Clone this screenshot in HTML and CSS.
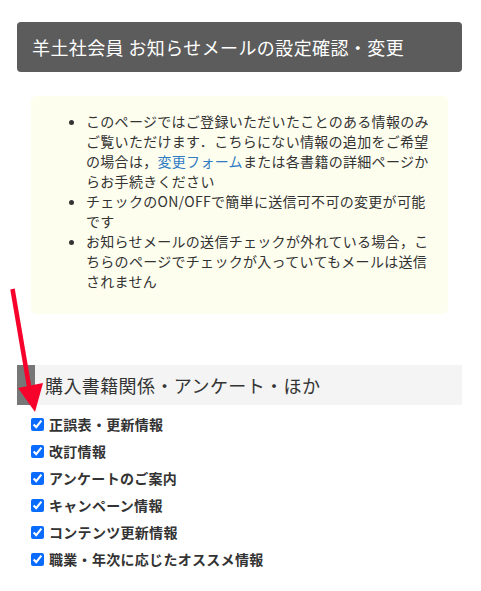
FILE: index.html
```html
<!DOCTYPE html>
<html lang="ja">
<head>
    <meta charset="UTF-8">
    <meta name="viewport" content="width=device-width, initial-scale=1.0">
    <title>お知らせメールの設定確認・変更</title>
    <link rel="stylesheet" href="styles.css">
</head>
<body>
    <div class="container">
        <h1 class="page-title">羊土社会員 お知らせメールの設定確認・変更</h1>

        <div class="notice">
            <ul>
                <li>このページではご登録いただいたことのある情報のみご覧いただけます．こちらにない情報の追加をご希望の場合は，<a href="#">変更フォーム</a>または各書籍の詳細ページからお手続きください</li>
                <li>チェックのON/OFFで簡単に送信可不可の変更が可能です</li>
                <li>お知らせメールの送信チェックが外れている場合，こちらのページでチェックが入っていてもメールは送信されません</li>
            </ul>
        </div>

        <h2 class="section-title">購入書籍関係・アンケート・ほか</h2>

        <div class="options">
            <label class="option"><input type="checkbox" checked>正誤表・更新情報</label>
            <label class="option"><input type="checkbox" checked>改訂情報</label>
            <label class="option"><input type="checkbox" checked>アンケートのご案内</label>
            <label class="option"><input type="checkbox" checked>キャンペーン情報</label>
            <label class="option"><input type="checkbox" checked>コンテンツ更新情報</label>
            <label class="option"><input type="checkbox" checked>職業・年次に応じたオススメ情報</label>
        </div>
    </div>

    <svg class="arrow" width="60" height="420" viewBox="0 0 60 420">
        <line x1="12.5" y1="289" x2="29" y2="386" stroke="#f7022a" stroke-width="4.5"/>
        <polygon points="18,388 43,383 35,412" fill="#f7022a"/>
    </svg>
</body>
</html>
```

FILE: styles.css
```css
body {
    margin: 0;
    padding: 0;
    background: #fff;
    color: #333;
    font-family: "Noto Sans CJK JP", "Noto Sans", sans-serif;
}

.container {
    padding: 22px 19px 20px 17px;
}

.page-title {
    margin: 0;
    height: 50px;
    padding: 0 15px;
    background: #5c5c5c;
    border-radius: 4px;
    color: #fff;
    font-size: 18px;
    font-weight: normal;
    line-height: 50px;
    letter-spacing: 0.4px;
}

.notice {
    margin: 24px 14px 0 14px;
    padding: 15px 16px 23px 0;
    background: #fefeef;
    border-radius: 5px;
    font-size: 14px;
    line-height: 20px;
    letter-spacing: 0.3px;
}

.notice ul {
    margin: 0;
    padding-left: 55px;
}

.notice a {
    color: #2f7bc4;
    text-decoration: none;
}

.section-title {
    margin: 51px 0 0 0;
    height: 40px;
    padding-left: 10px;
    background: #f4f4f4;
    border-left: 18px solid #777;
    font-size: 18px;
    font-weight: normal;
    line-height: 40px;
    letter-spacing: 0.4px;
    color: #333;
}

.options {
    display: flex;
    flex-direction: column;
    gap: 7px;
    margin-top: 9px;
    padding-left: 14px;
}

.option {
    display: flex;
    align-items: center;
    height: 20px;
    font-size: 14px;
    font-weight: bold;
    letter-spacing: 0.3px;
    color: #333;
}

.option input {
    width: 13px;
    height: 13px;
    margin: 0 5px 0 0;
    accent-color: #0a6cff;
}

.arrow {
    position: absolute;
    left: 0;
    top: 0;
}
```
